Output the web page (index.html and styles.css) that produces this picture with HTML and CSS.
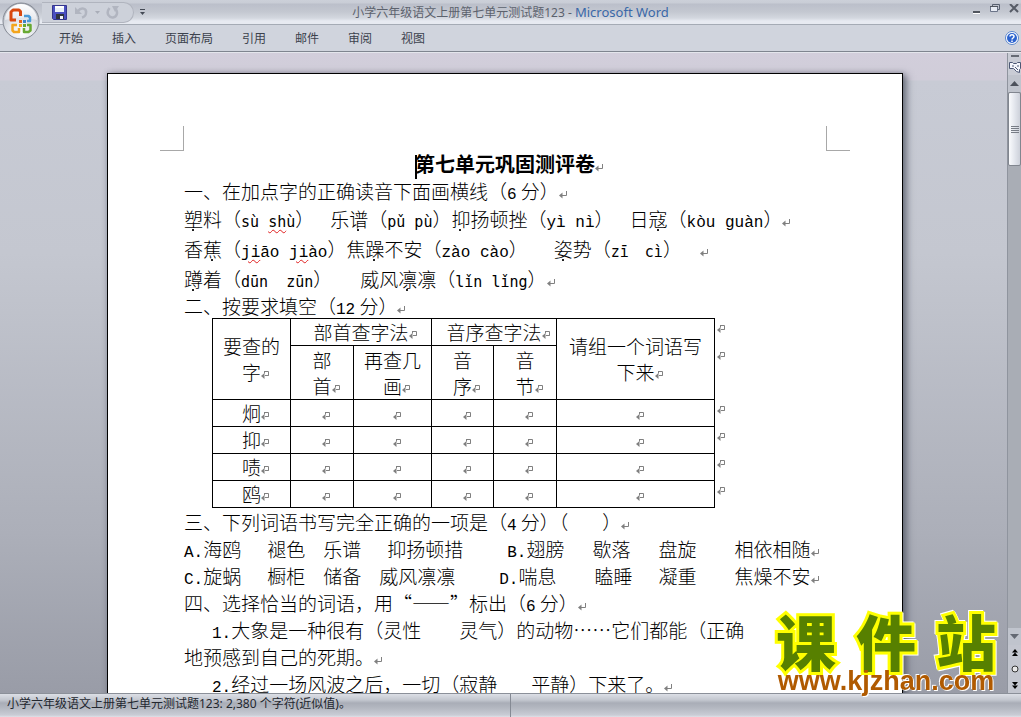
FILE: index.html
```html
<!DOCTYPE html>
<html lang="zh-CN">
<head>
<meta charset="utf-8">
<title>小学六年级语文上册第七单元测试题123 - Microsoft Word</title>
<link rel="stylesheet" href="styles.css">
</head>
<body>
<svg class="defs" aria-hidden="true">
  <symbol id="pm" viewBox="0 0 8 8"><path d="M7.5 0v4.5H2" fill="none" stroke="#808080"/><path d="M0 4.5L3.5 1.500v6z" fill="#808080"/></symbol>
  <symbol id="cm" viewBox="0 0 8 8"><path d="M3 .5h4.500v4H5.500M3.500 .5v2M4 4.500h3.500" fill="none" stroke="#808080"/><path d="M0 5L3.500 2v6z" fill="#808080"/></symbol>
</svg>
<div class="app">
  <header class="top">
    <div class="titlebar">
      <div class="quick">
        <button class="ib" aria-label="保存"><svg width="15" height="15" viewBox="0 0 15 15"><path d="M.5 .5h14v14H1.500l-1-1z" fill="#4a4fc0" stroke="#34358e"/><path d="M3 1h9v6H3z" fill="#e9f0fb"/><path d="M3 1h9v2H3z" fill="#fff"/><path d="M4 9h8v5H4z" fill="#30343f"/><path d="M8 11h3v3H8z" fill="#f4f4f8"/></svg></button>
        <button class="ib" aria-label="撤消"><svg width="14" height="13" viewBox="0 0 14 13"><path d="M3 5C6 1 12 2 11 7c0 2-2 4-4 4.500" fill="none" stroke="#b1b5c0" stroke-width="2.500"/><path d="M0 1v7h7z" fill="#b1b5c0"/></svg></button>
        <svg class="tiny" width="5" height="3"><path d="M0 0h5L2.500 3z" fill="#a9adb8"/></svg>
        <button class="ib" aria-label="重复"><svg width="14" height="13" viewBox="0 0 14 13"><path d="M3.500 2C-1 8 4 12 7 11.500c4-.5 5-5 3-8" fill="none" stroke="#b1b5c0" stroke-width="2.500"/><path d="M6 0h7L9 6z" fill="#b1b5c0"/></svg></button>
      </div>
      <button class="ib more" aria-label="自定义快速访问工具栏"><svg width="5" height="6"><path d="M0 .5h5" stroke="#444a55"/><path d="M0 3h5L2.500 6z" fill="#444a55"/></svg></button>
      <h1 class="caption">小学六年级语文上册第七单元测试题123 - <span class="brand">Microsoft Word</span></h1>
      <div class="winbtns">
        <button class="ib" aria-label="最小化"><svg width="9" height="12"><path d="M1 9h7v2H1z" fill="#50555e"/><path d="M1 11.500h7" stroke="#fff"/></svg></button>
        <button class="ib" aria-label="还原"><svg width="10" height="9"><path d="M2.500 3V.5h7v5H8" fill="none" stroke="#596170"/><path d="M.5 2.500h7v5h-7z" fill="#e7ebf3" stroke="#6b7488"/><path d="M0 2.500h8" stroke="#50555e"/></svg></button>
        <button class="ib" aria-label="关闭"><svg width="10" height="9"><path d="M1 0l8 8M9 0L1 8" stroke="#565b66" stroke-width="2"/></svg></button>
      </div>
    </div>
    <nav class="tabs">
      <button>开始</button><button>插入</button><button>页面布局</button><button>引用</button><button>邮件</button><button>审阅</button><button>视图</button>
      <button class="ib help" aria-label="帮助"><svg width="14" height="14"><circle cx="7" cy="7" r="6.500" fill="#fff" stroke="#5b86cc"/><circle cx="7" cy="7" r="5" fill="#2c63cf"/><path d="M5 5.500c0-2.500 4-2.500 4 0C9 7 7 7 7 8.500M7 9.500v1.500" fill="none" stroke="#fff" stroke-width="1.500"/></svg></button>
    </nav>
    <button class="office" aria-label="Office 按钮"><svg width="38" height="38" viewBox="0 0 38 38">
      <defs><radialGradient id="og" cx=".5" cy=".8" r=".8"><stop offset="0" stop-color="#fff"/><stop offset=".5" stop-color="#dfe2e8"/><stop offset="1" stop-color="#aeb3bd"/></radialGradient>
      <linearGradient id="hi" x2="0" y2="1"><stop offset="0" stop-color="#fff"/><stop offset="1" stop-color="#e6e8ed"/></linearGradient></defs>
      <circle cx="19" cy="19" r="18" fill="url(#og)" stroke="#858a94"/>
      <path d="M3 18a16 16 0 0 1 32 0q-16-4-32 0z" fill="url(#hi)"/>
      <g fill="none" stroke-width="3" stroke-linejoin="round">
      <path d="M14 18H9V10l2-2h6l1.500 1.500V14" stroke="#d9480f"/>
      <path d="M22 14h4.500l1.500 1.500V19h-3" stroke="#4a9ad8" stroke-width="2.500"/>
      <path d="M15 23h-4.500v5.500L12 30h5v-4" stroke="#f3a51c" stroke-width="2.500"/>
      <path d="M22 26v4h4.500l2-1.500V23H25" stroke="#68a932" stroke-width="2.500"/></g>
      <g><path d="M17 18h3v3h-3z" fill="#e4641c"/><path d="M21 18h3v3h-3z" fill="#3f83c8"/><path d="M17 22h3v3h-3z" fill="#efb022"/><path d="M21 22h3v3h-3z" fill="#68a932"/></g>
    </svg></button>
  </header>

  <div class="work">
    <main class="desk">
      <article class="page">
        <i class="crop cl"></i><i class="crop cr"></i>
        <h2><i class="caret"></i>第七单元巩固测评卷<svg class="pm"><use href="#pm"/></svg></h2>
        <p>一、在加点字的正确读音下面画横线（<span class="m">6</span> 分）<svg class="pm"><use href="#pm"/></svg></p>
        <p class="py"><b>塑</b>料（<span class="k">sù <u>sh</u>ù</span>）<i class="g16"></i>乐<b>谱</b>（<span class="k">pǔ pù</span>）<b>抑</b>扬顿挫（<span class="m">yì nì</span>）<i class="g16"></i>日<b>寇</b>（<span class="m">kòu guàn</span>）<svg class="pm"><use href="#pm"/></svg></p>
        <p class="py">香<b>蕉</b>（<span class="m"><u>ji</u>āo <u>ji</u>ào</span>）焦<b>躁</b>不安（<span class="m">zào cào</span>）<i class="g26"></i><b>姿</b>势（<span class="k">zī<i class="g16"></i>cì</span>）<i class="g18"></i><svg class="pm"><use href="#pm"/></svg></p>
        <p class="py"><b>蹲</b>着（<span class="k">dūn<i class="g18"></i>zūn</span>）<i class="g28"></i>威风<b>凛</b>凛（<span class="k">lǐn lǐng</span>）<svg class="pm"><use href="#pm"/></svg></p>
        <p class="tight">二、按要求填空（<span class="m">12</span> 分）<svg class="pm"><use href="#pm"/></svg></p>
        <table>
          <colgroup><col class="c78"><col class="c63"><col class="c78"><col class="c62"><col class="c63"><col class="c158"><col class="c12"></colgroup>
          <tr><th rowspan="2">要查的<br>字<svg class="pm"><use href="#cm"/></svg></th><th colspan="2">部首查字法<svg class="pm"><use href="#cm"/></svg></th><th colspan="2">音序查字法<svg class="pm"><use href="#cm"/></svg></th><th rowspan="2">请组一个词语写<br>下来<svg class="pm"><use href="#cm"/></svg></th><td class="end"><svg class="pm"><use href="#cm"/></svg></td></tr>
          <tr class="tall"><th>部<br>首<svg class="pm"><use href="#cm"/></svg></th><th>再查几<br>画<svg class="pm"><use href="#cm"/></svg></th><th>音<br>序<svg class="pm"><use href="#cm"/></svg></th><th>音<br>节<svg class="pm"><use href="#cm"/></svg></th><td class="end"><svg class="pm"><use href="#cm"/></svg></td></tr>
          <tr><td>炯<svg class="pm"><use href="#cm"/></svg></td><td><svg class="pm"><use href="#cm"/></svg></td><td><svg class="pm"><use href="#cm"/></svg></td><td><svg class="pm"><use href="#cm"/></svg></td><td><svg class="pm"><use href="#cm"/></svg></td><td><svg class="pm"><use href="#cm"/></svg></td><td class="end"><svg class="pm"><use href="#cm"/></svg></td></tr>
          <tr><td>抑<svg class="pm"><use href="#cm"/></svg></td><td><svg class="pm"><use href="#cm"/></svg></td><td><svg class="pm"><use href="#cm"/></svg></td><td><svg class="pm"><use href="#cm"/></svg></td><td><svg class="pm"><use href="#cm"/></svg></td><td><svg class="pm"><use href="#cm"/></svg></td><td class="end"><svg class="pm"><use href="#cm"/></svg></td></tr>
          <tr><td>啧<svg class="pm"><use href="#cm"/></svg></td><td><svg class="pm"><use href="#cm"/></svg></td><td><svg class="pm"><use href="#cm"/></svg></td><td><svg class="pm"><use href="#cm"/></svg></td><td><svg class="pm"><use href="#cm"/></svg></td><td><svg class="pm"><use href="#cm"/></svg></td><td class="end"><svg class="pm"><use href="#cm"/></svg></td></tr>
          <tr><td>鸥<svg class="pm"><use href="#cm"/></svg></td><td><svg class="pm"><use href="#cm"/></svg></td><td><svg class="pm"><use href="#cm"/></svg></td><td><svg class="pm"><use href="#cm"/></svg></td><td><svg class="pm"><use href="#cm"/></svg></td><td><svg class="pm"><use href="#cm"/></svg></td><td class="end"><svg class="pm"><use href="#cm"/></svg></td></tr>
        </table>
        <p>三、下列词语书写完全正确的一项是（<span class="m">4</span> 分）（<i class="g34"></i>）<svg class="pm"><use href="#pm"/></svg></p>
        <p><span class="m">A.</span>海鸥<i class="g26"></i>褪色<i class="g18"></i>乐谱<i class="g26"></i>抑扬顿措<i class="g44"></i><span class="m">B.</span>翅膀<i class="g28"></i>歇落<i class="g28"></i>盘旋<i class="g38"></i>相依相随<svg class="pm"><use href="#pm"/></svg></p>
        <p><span class="m">C.</span>旋蜗<i class="g26"></i>橱柜<i class="g18"></i>储备<i class="g18"></i>威风凛凛<i class="g44"></i><span class="m">D.</span>喘息<i class="g38"></i>瞌睡<i class="g26"></i>凝重<i class="g38"></i>焦燥不安<svg class="pm"><use href="#pm"/></svg></p>
        <p>四、选择恰当的词语，用“——”标出（<span class="m">6</span> 分）<svg class="pm"><use href="#pm"/></svg></p>
        <p><i class="g28"></i><span class="m">1.</span>大象是一种很有（灵性<i class="g38"></i>灵气）的动物……它们都能（正确<br>地预感到自己的死期。<svg class="pm"><use href="#pm"/></svg></p>
        <p><i class="g28"></i><span class="m">2.</span>经过一场风波之后，一切（寂静<i class="g34"></i>平静）下来了。<svg class="pm"><use href="#pm"/></svg></p>
      </article>
    </main>
    <aside class="scroll">
      <div class="cap"><i class="split"></i>
        <button class="ib" aria-label="标尺"><svg width="12" height="12"><path d="M.5 1.500h3l1 1h3l1-1h3v6l-1 1v3l-3-1-3-3h-4z" fill="#f4f5fa" stroke="#4d5875"/><path d="M3 5h2M6 6l3 3M9 4v2" stroke="#4d5875"/></svg></button></div>
      <button class="ib arrow" aria-label="向上滚动"><svg width="9" height="5"><path d="M0 5L4.500 0 9 5z" fill="#4c515b"/></svg></button>
      <div class="thumb"><i></i><i></i><i></i><i></i></div>
      <button class="ib arrow down" aria-label="向下滚动"><svg width="9" height="5"><path d="M0 0h9L4.500 5z" fill="#646973"/></svg></button>
      <div class="browse">
        <button class="ib" aria-label="上一页"><svg width="6" height="7"><path d="M0 3.500L3 0l3 3.500zM0 7l3-3.500L6 7z"/></svg></button>
        <button class="ib" aria-label="选择浏览对象"><svg width="8" height="8"><circle cx="4" cy="4" r="3" fill="#e8e8e8" stroke="#333"/></svg></button>
        <button class="ib" aria-label="下一页"><svg width="6" height="7"><path d="M0 0h6L3 3.500zM0 3.500h6L3 7z"/></svg></button>
      </div>
    </aside>
  </div>

  <footer class="status"><span>小学六年级语文上册第七单元测试题123: 2,380 个字符(近似值)。</span></footer>
  <div class="mark">
    <div class="name"><span>课</span><span>件</span><span>站</span></div>
    <div class="url">www.kjzhan.com</div>
  </div>
</div>
</body>
</html>
```

FILE: styles.css
```css
* { box-sizing: border-box; }
body { margin: 0; font-family: "Noto Sans", "Noto Sans CJK SC", sans-serif; font-size: 12px; color: #3c424d; }
button { font: inherit; color: inherit; background: none; border: 0; padding: 0; margin: 0; }
i { font-style: normal; }
.defs { position: absolute; width: 0; height: 0; }
.ib { display: flex; align-items: center; justify-content: center; }
.app { position: relative; display: flex; flex-direction: column; height: 100vh; overflow: hidden; }

.top { position: relative; }
.titlebar { display: grid; grid-template-columns: auto auto 1fr auto; align-items: center; height: 25px; padding-left: 42px;
  background: linear-gradient(#ccd0d9 0, #c9cdd6 3px, #bbbfca 4px, #c4c8d1 12px, #d3d7df 18px, #e7eaf1 21px, #e7eaf1 24px); border-bottom: 1px solid #a5abb5; }
.quick { display: flex; align-items: center; gap: 8px; width: 92px; height: 21px; padding: 0 14px 0 10px; background: #cdd1da;
  border: 1px solid #b0b4be; border-left: 0; border-radius: 0 11px 11px 0; }
.quick .tiny { flex: none; margin: 0 -2px; }
.more { width: 17px; }
.caption { position: absolute; left: 0; right: 0; top: 0; margin: 0; line-height: 25px; text-align: center; font-size: 12px; font-weight: 400; color: #5c626d; white-space: nowrap; pointer-events: none; }
.brand { font-size: 13px; color: #3a68a8; }
.winbtns { grid-column: 4; display: flex; gap: 9px; padding-right: 2px; align-self: start; }
.winbtns .ib { height: 16px; }
.tabs { display: flex; align-items: center; gap: 29px; height: 27px; padding: 0 2px 0 59px; background: #d0d4dd; border-bottom: 1px solid #7f858f; }
.tabs .help { margin-left: auto; }
.office { position: absolute; left: 2px; top: 2px; line-height: 0; }

.work { flex: 1; min-height: 0; display: flex; background: linear-gradient(#d2cedb 0, #d0cdd9 27px, #c8cbd5 28px, #c4c7d0 200px, #acafb9 480px, #999ca7 641px); border-top: 1px solid #e4e6ec; }
.desk { flex: 1; min-width: 0; overflow: hidden; padding: 20px 0 0 3px; }
.page { position: relative; max-width: 796px; height: 1123px; margin: 0 auto; padding: 77px 76px; background: #fff; border: 1px solid #000;
  box-shadow: 4px 2px 7px rgba(60, 66, 80, .6), 0 0 5px rgba(90, 96, 110, .4);
  font-family: "Noto Sans CJK SC", sans-serif; font-size: 19px; font-weight: 300; line-height: 27px; color: #000; white-space: nowrap; }
.page h2 { margin: 0; height: 26px; font-size: 20px; line-height: 26px; text-align: center; }
.page p { margin: 0; }
.page .py { line-height: 30px; }
.page .tight { line-height: 23px; }
.caret { display: inline-block; width: 2px; height: 24px; margin-right: -2px; background: #000; vertical-align: middle; }
.crop { position: absolute; top: 52px; width: 24px; height: 25px; border: 0 solid #a8a8a8; border-bottom-width: 1px; }
.cl { left: 52px; border-right-width: 1px; }
.cr { right: 52px; border-left-width: 1px; }
.pm { width: 8px; height: 8px; margin-right: -8px; }
.m { font-family: "Liberation Mono", monospace; font-size: 16px; line-height: 16px; }
.k { font-family: "DejaVu Sans Mono", monospace; font-size: 15px; line-height: 16px; }
.page b { position: relative; font-weight: inherit; }
.page b::after { content: ""; position: absolute; left: 8px; bottom: 1px; width: 2px; height: 2px; background: #222; }
.page u { text-decoration: underline wavy #e02020 1px; text-underline-offset: 2px; }
.g16, .g18, .g26, .g28, .g34, .g38, .g44 { display: inline-block; }
.g16 { width: 16px; }
.g18 { width: 18px; }
.g26 { width: 26px; }
.g28 { width: 28px; }
.g34 { width: 34px; }
.g38 { width: 38px; }
.g44 { width: 44px; }

table { margin: 0 0 0 28px; border-collapse: collapse; table-layout: fixed; width: 514px; line-height: 26px; }
table .pm { vertical-align: 1px; }
.c78 { width: 78px; }
.c62 { width: 62px; }
.c63 { width: 63px; }
.c158 { width: 158px; }
.c12 { width: 12px; }
th, td { height: 27px; padding: 0; border: 1px solid #000; text-align: center; font-weight: inherit; vertical-align: middle; }
.tall th { height: 54px; }
td.end { border-width: 0 0 0 1px; padding: 6px 0 0 2px; vertical-align: top; text-align: left; line-height: 0; }

.scroll { display: flex; flex-direction: column; width: 14px; background: #a9adb5; border-left: 1px solid #8f949e; }
.cap { display: flex; flex-direction: column; align-items: center; gap: 4px; height: 22px; padding-top: 2px; background: #c9ccd5; }
.split { width: 8px; height: 2px; background: #666b75; }
.arrow { height: 17px; background: #c0c4cd; }
.thumb { display: flex; flex-direction: column; align-items: center; justify-content: center; gap: 1px; height: 74px; border: 1px solid #81868f; border-radius: 2px; background: linear-gradient(90deg, #fafbfd, #e3e6ed 50%, #cdd1da); }
.thumb i { width: 8px; height: 1px; background: #777c86; }
.down { margin-top: auto; }
.browse { display: flex; flex-direction: column; align-items: center; justify-content: space-around; height: 48px; background: #c3c6cf; }

.status { display: flex; height: 24px; line-height: 20px; color: #23272f; border-top: 1px solid #8b9099;
  background: linear-gradient(#dcdfe6 0, #c3c7cf 6px, #a9adb7 9px, #b4b8c1 14px, #c9ccd5 21px, #dfe1e7 23px); }
.status span { width: 50%; padding-left: 7px; border-right: 1px solid #858a94; }

.mark { position: absolute; right: 21px; bottom: 24px; width: 228px; color: #578000; filter: drop-shadow(1px 1px 0 #fff) drop-shadow(-1px -1px 0 #fff); }
.name { display: flex; justify-content: space-between; font: 900 60px/58px "Noto Sans CJK SC", sans-serif; padding: 0 4px; -webkit-text-stroke: 6px #ff0; paint-order: stroke fill; }
.url { text-align: center; font: bold 27px/24px "Liberation Sans", sans-serif; color: #b05a00; }
```
